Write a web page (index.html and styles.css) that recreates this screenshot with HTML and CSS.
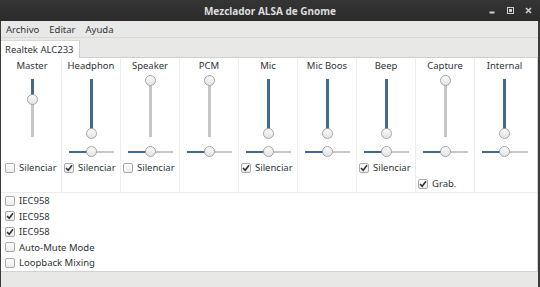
FILE: index.html
```html
<!DOCTYPE html>
<html lang="es">
<head>
  <meta charset="UTF-8">
  <title>Mezclador ALSA de Gnome</title>
  <link rel="stylesheet" href="styles.css">
</head>
<body>
  <div class="window">

    <!-- Barra de título -->
    <div class="titlebar">
      <span></span>
      <span class="title">Mezclador ALSA de Gnome</span>
      <div class="controls">
        <svg width="7" height="7" viewBox="0 0 7 7"><rect x="0.5" y="4.5" width="5" height="2" fill="#d0d0d0"/></svg>
        <svg width="7" height="7" viewBox="0 0 7 7"><rect x="0.5" y="0.5" width="6" height="6" fill="none" stroke="#d0d0d0"/><rect x="2" y="2" width="3" height="3" fill="#d0d0d0"/></svg>
        <svg width="7" height="7" viewBox="0 0 7 7"><path d="M1 1 L6 6 M6 1 L1 6" stroke="#d0d0d0" stroke-width="1.6"/></svg>
      </div>
    </div>

    <!-- Menú -->
    <div class="menubar">
      <span>Archivo</span>
      <span>Editar</span>
      <span>Ayuda</span>
    </div>

    <!-- Pestañas -->
    <div class="tabs">
      <div class="tab">Realtek ALC233</div>
      <div class="tab-rest"></div>
    </div>

    <div class="page">
      <div class="channels">

        <div class="channel">
          <div class="name">Master</div>
          <div class="vscale"><div class="fill" style="height:20px"></div><div class="knob"></div><div class="rest"></div></div>
          <div class="hscale empty"></div>
          <label class="check"><span class="box"></span>Silenciar</label>
        </div>

        <div class="channel">
          <div class="name">Headphon</div>
          <div class="vscale"><div class="fill" style="height:54px"></div><div class="knob"></div><div class="rest"></div></div>
          <div class="hscale"><div class="fill" style="width:22px"></div><div class="knob"></div><div class="rest"></div></div>
          <label class="check"><span class="box on"><svg width="8" height="8" viewBox="0 0 8 8"><path d="M1 4 L3.2 6.3 L7 1.3" fill="none" stroke="#2e3436" stroke-width="1.6"/></svg></span>Silenciar</label>
        </div>

        <div class="channel">
          <div class="name">Speaker</div>
          <div class="vscale"><div class="fill" style="height:1px"></div><div class="knob"></div><div class="rest"></div></div>
          <div class="hscale"><div class="fill" style="width:22px"></div><div class="knob"></div><div class="rest"></div></div>
          <label class="check"><span class="box"></span>Silenciar</label>
        </div>

        <div class="channel">
          <div class="name">PCM</div>
          <div class="vscale"><div class="fill" style="height:1px"></div><div class="knob"></div><div class="rest"></div></div>
          <div class="hscale"><div class="fill" style="width:22px"></div><div class="knob"></div><div class="rest"></div></div>
        </div>

        <div class="channel">
          <div class="name">Mic</div>
          <div class="vscale"><div class="fill" style="height:54px"></div><div class="knob"></div><div class="rest"></div></div>
          <div class="hscale"><div class="fill" style="width:22px"></div><div class="knob"></div><div class="rest"></div></div>
          <label class="check"><span class="box on"><svg width="8" height="8" viewBox="0 0 8 8"><path d="M1 4 L3.2 6.3 L7 1.3" fill="none" stroke="#2e3436" stroke-width="1.6"/></svg></span>Silenciar</label>
        </div>

        <div class="channel">
          <div class="name">Mic Boos</div>
          <div class="vscale"><div class="fill" style="height:54px"></div><div class="knob"></div><div class="rest"></div></div>
          <div class="hscale"><div class="fill" style="width:22px"></div><div class="knob"></div><div class="rest"></div></div>
        </div>

        <div class="channel">
          <div class="name">Beep</div>
          <div class="vscale"><div class="fill" style="height:54px"></div><div class="knob"></div><div class="rest"></div></div>
          <div class="hscale"><div class="fill" style="width:22px"></div><div class="knob"></div><div class="rest"></div></div>
          <label class="check"><span class="box on"><svg width="8" height="8" viewBox="0 0 8 8"><path d="M1 4 L3.2 6.3 L7 1.3" fill="none" stroke="#2e3436" stroke-width="1.6"/></svg></span>Silenciar</label>
        </div>

        <div class="channel">
          <div class="name">Capture</div>
          <div class="vscale"><div class="fill" style="height:1px"></div><div class="knob"></div><div class="rest"></div></div>
          <div class="hscale"><div class="fill" style="width:22px"></div><div class="knob"></div><div class="rest"></div></div>
          <div class="check blank"></div>
          <label class="check"><span class="box on"><svg width="8" height="8" viewBox="0 0 8 8"><path d="M1 4 L3.2 6.3 L7 1.3" fill="none" stroke="#2e3436" stroke-width="1.6"/></svg></span>Grab.</label>
        </div>

        <div class="channel">
          <div class="name">Internal</div>
          <div class="vscale"><div class="fill" style="height:54px"></div><div class="knob"></div><div class="rest"></div></div>
          <div class="hscale"><div class="fill" style="width:22px"></div><div class="knob"></div><div class="rest"></div></div>
        </div>

      </div>

      <!-- Interruptores -->
      <div class="switches">
        <label class="check"><span class="box"></span>IEC958</label>
        <label class="check"><span class="box on"><svg width="8" height="8" viewBox="0 0 8 8"><path d="M1 4 L3.2 6.3 L7 1.3" fill="none" stroke="#2e3436" stroke-width="1.6"/></svg></span>IEC958</label>
        <label class="check"><span class="box on"><svg width="8" height="8" viewBox="0 0 8 8"><path d="M1 4 L3.2 6.3 L7 1.3" fill="none" stroke="#2e3436" stroke-width="1.6"/></svg></span>IEC958</label>
        <label class="check"><span class="box"></span>Auto-Mute Mode</label>
        <label class="check"><span class="box"></span>Loopback Mixing</label>
      </div>
    </div>

    <div class="statusbar"></div>
  </div>
</body>
</html>
```

FILE: styles.css
```css
body {
  margin: 0;
  font-family: "Noto Sans", sans-serif;
  font-size: 9.5px;
  color: #2e3436;
  background: #3a3a3a;
}

.window {
  width: 540px;
  height: 287px;
  box-sizing: border-box;
  border-left: 1px solid #3b3b3b;
  border-right: 2px solid #3b3b3b;
  border-bottom: 1px solid #3b3b3b;
  display: flex;
  flex-direction: column;
  background: #e8e8e7;
}

.titlebar {
  height: 21px;
  flex: none;
  display: grid;
  grid-template-columns: 1fr auto 1fr;
  align-items: center;
  background: linear-gradient(#353535, #2b2b2b);
  margin-left: -1px;
  margin-right: -2px;
}

.title {
  color: #dedede;
  font-weight: bold;
  font-size: 10px;
}

.controls {
  display: flex;
  justify-content: flex-end;
  gap: 11px;
  padding-right: 8px;
}

.menubar {
  height: 17px;
  flex: none;
  display: flex;
  align-items: center;
  border-bottom: 1px solid #d8d8d6;
  box-sizing: border-box;
}

.menubar span {
  padding: 0 5px;
}

.tabs {
  height: 20px;
  flex: none;
  display: flex;
  box-sizing: border-box;
}

.tab {
  background: #fff;
  padding: 0 5px 0 4px;
  margin-top: 2px;
  line-height: 17px;
  border-right: 1px solid #cfcfcd;
  border-top: 1px solid #d8d8d6;
}

.tab-rest {
  flex: 1;
  border-bottom: 1px solid #cfcfcd;
}

.page {
  flex: 1;
  background: #fff;
  border-right: 1px solid #d6d6d4;
  border-bottom: 1px solid #d2d2d0;
}

.channels {
  display: flex;
  padding-left: 2px;
  height: 134px;
  border-bottom: 1px solid #ececec;
}

.channel {
  width: 59px;
  box-sizing: border-box;
  border-right: 1px solid #ededed;
  display: flex;
  flex-direction: column;
}

.channel:last-child {
  border-right: none;
}

.name {
  text-align: center;
  line-height: 14px;
  padding-top: 1px;
}

.vscale {
  display: flex;
  flex-direction: column;
  align-items: center;
  height: 58px;
  margin-top: 6px;
}

.vscale .fill,
.vscale .rest {
  width: 3px;
}

.vscale .knob {
  margin: -5px 0;
}

.vscale .rest {
  flex: 1;
}

.fill {
  background: #44698f;
}

.rest {
  background: #c6c6c6;
}

.knob {
  width: 9px;
  height: 9px;
  flex: none;
  border-radius: 50%;
  border: 1px solid #a5a5a5;
  background: linear-gradient(#fafafa, #e4e4e4);
  position: relative;
}

.hscale {
  display: flex;
  align-items: center;
  height: 11px;
  margin: 9px 6px 0 7px;
}

.hscale .fill,
.hscale .rest {
  height: 2px;
}

.hscale .knob {
  margin: 0 -5px;
}

.hscale .rest {
  flex: 1;
}

.check {
  display: flex;
  align-items: center;
  gap: 4px;
  line-height: 14px;
  height: 14px;
  padding-left: 2px;
  margin-top: 4px;
}

.check.blank {
  visibility: hidden;
}

.channel .check + .check {
  margin-top: 2px;
}

.box {
  width: 8px;
  height: 8px;
  flex: none;
  border: 1px solid #aaa;
  border-radius: 2px;
  background: linear-gradient(#fff, #ececec);
  display: flex;
  align-items: center;
  justify-content: center;
}

.switches {
  padding-left: 2px;
}

.switches .check {
  margin-top: 0;
  height: 15.5px;
  line-height: 15.5px;
}

.statusbar {
  height: 15px;
  flex: none;
  background: #e8e8e7;
}
```
